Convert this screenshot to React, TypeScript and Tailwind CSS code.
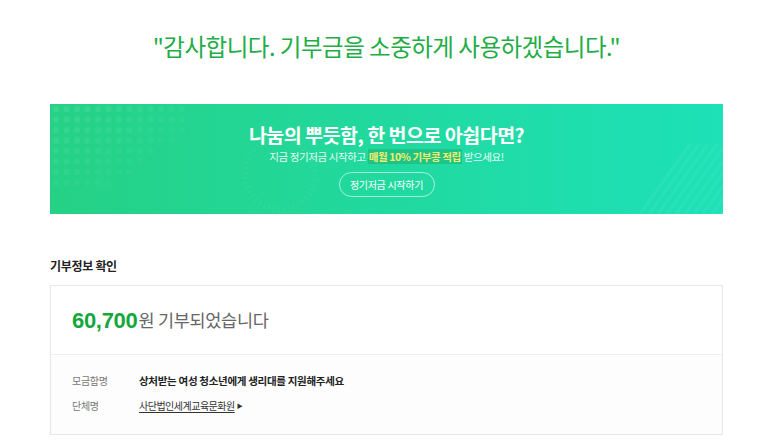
import React from "react";

const font = { fontFamily: '"Noto Sans CJK KR", "Noto Sans", sans-serif' };

function Decor() {
  const dots: React.ReactElement[] = [];
  for (let r = 0; r < 8; r++) {
    for (let c = 0; c < 13; c++) {
      const fade = 1 - (c / 13) * 0.6 - (r / 8) * 0.5;
      if (c + r * 1.3 > 15) continue;
      dots.push(
        <circle key={`${r}-${c}`} cx={6 + c * 10.5} cy={5 + r * 10.5} r={3.2} fill="#ffffff" opacity={Math.max(0.03, 0.09 * fade)} />
      );
    }
  }
  const stripes: React.ReactElement[] = [];
  for (let i = 0; i < 14; i++) {
    stripes.push(
      <line key={i} x1={590 + i * 9} y1={110} x2={640 + i * 9} y2={40} stroke="#ffffff" strokeWidth={3} opacity={0.05} />
    );
  }
  return (
    <svg className="absolute inset-0 pointer-events-none" width="673" height="110" viewBox="0 0 673 110">
      {dots}
      <circle cx={230} cy={70} r={35} fill="none" stroke="#ffffff" strokeWidth={6} opacity={0.04} strokeDasharray="2 3" />
      {stripes}
    </svg>
  );
}

export default function App() {
  return (
    <div className="w-[773px] h-[444px] bg-white overflow-hidden" style={font}>
      <div className="pt-[29px] text-center text-[23.5px] leading-[34px] text-[#21ad45] tracking-[-0.5px]">
        "감사합니다. 기부금을 소중하게 사용하겠습니다."
      </div>

      <div className="mx-[50px] mt-[41px] relative h-[110px] bg-gradient-to-r from-[#25d185] to-[#1de1b8] overflow-hidden">
        <Decor />
        <div className="relative flex flex-col items-center pt-[18px]">
          <div className="text-[19.5px] leading-[26px] font-bold text-white tracking-[-0.5px]">
            나눔의 뿌듯함, 한 번으로 아쉽다면?
          </div>
          <div className="mt-[1px] text-[10.5px] leading-[16px] text-white/90 tracking-[-0.4px]">
            지금 정기저금 시작하고 <span className="bg-[#1fb477]/60 text-[#f3ee6a] font-bold px-[1px]">매월 10% 기부콩 적립</span> 받으세요!
          </div>
          <div className="mt-[7px] h-[25px] w-[96px] rounded-full border border-white/60 flex items-center justify-center text-[10px] text-white tracking-[-0.3px]">
            정기저금 시작하기
          </div>
        </div>
      </div>

      <div className="mx-[50px] mt-[43px] text-[12px] leading-[18px] font-bold text-[#222] tracking-[-0.3px]">
        기부정보 확인
      </div>

      <div className="mx-[50px] mt-[10px] border-[1.5px] border-[#e6e6e6] bg-white">
        <div className="h-[69px] flex items-center pl-[21px] border-b border-[#f0f0f0]">
          <span className="text-[22px] font-bold text-[#13a83c] tracking-[-0.3px]" style={{ fontFamily: '"Liberation Sans", "Noto Sans CJK KR", sans-serif' }}>60,700</span>
          <span className="ml-[1px] text-[17.5px] text-[#666] tracking-[-0.3px]">원 기부되었습니다</span>
        </div>
        <div className="bg-[#fdfdfd] pl-[21px] pt-[18px] pb-[20px] text-[10px] leading-[16px] tracking-[-0.3px]">
          <div className="flex h-[16px] items-center">
            <span className="w-[67px] text-[#777]">모금함명</span>
            <span className="font-bold text-[10.5px] text-[#222]">상처받는 여성 청소년에게 생리대를 지원해주세요</span>
          </div>
          <div className="flex h-[16px] items-center mt-[9px]">
            <span className="w-[67px] text-[#777]">단체명</span>
            <span className="text-[#333] underline underline-offset-2 tracking-[-0.5px]">사단법인세계교육문화원</span>
            <span className="ml-[2px] text-[6px] text-[#333]">▶</span>
          </div>
        </div>
      </div>
    </div>
  );
}
